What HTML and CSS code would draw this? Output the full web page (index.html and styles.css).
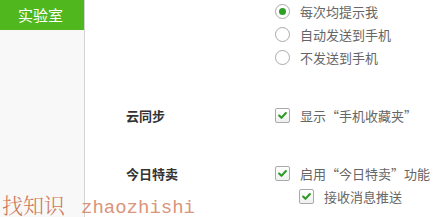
FILE: index.html
```html
<!DOCTYPE html>
<html lang="zh-CN">
<head>
<meta charset="utf-8">
<link rel="stylesheet" href="styles.css">
</head>
<body>
<div class="app">
  <aside class="sidebar">
    <div class="tab active">实验室</div>
  </aside>
  <main class="main">
    <section class="group">
      <div class="label"></div>
      <div class="controls">
        <div class="row"><span class="radio checked"></span><span class="text">每次均提示我</span></div>
        <div class="row"><span class="radio"></span><span class="text">自动发送到手机</span></div>
        <div class="row"><span class="radio"></span><span class="text">不发送到手机</span></div>
      </div>
    </section>
    <section class="group">
      <div class="label">云同步</div>
      <div class="controls">
        <div class="row"><span class="check"><svg viewBox="0 0 15 15"><path d="M3.6 7.6 L6.3 10.2 L11.4 4.6"/></svg></span><span class="text">显示“手机收藏夹”</span></div>
      </div>
    </section>
    <section class="group">
      <div class="label">今日特卖</div>
      <div class="controls">
        <div class="row"><span class="check"><svg viewBox="0 0 15 15"><path d="M3.6 7.6 L6.3 10.2 L11.4 4.6"/></svg></span><span class="text">启用“今日特卖”功能</span></div>
        <div class="row sub"><span class="check"><svg viewBox="0 0 15 15"><path d="M3.6 7.6 L6.3 10.2 L11.4 4.6"/></svg></span><span class="text">接收消息推送</span></div>
      </div>
    </section>
  </main>
</div>
<div class="watermark"><span class="wm-cjk">找知识</span><span class="wm-latin">zhaozhishi</span></div>
</body>
</html>
```
FILE: styles.css
```css
html, body {
  margin: 0;
  padding: 0;
  background: #ffffff;
}
body {
  font-family: "Noto Sans CJK SC", "Noto Sans", sans-serif;
  font-size: 13px;
  color: #666666;
  width: 445px;
  height: 217px;
  overflow: hidden;
  position: relative;
}
.app {
  display: flex;
  height: 217px;
}
.sidebar {
  width: 84px;
  flex: none;
  background: #f8f8f8;
  border-right: 1px solid #d3d3d3;
}
.tab {
  height: 30px;
  line-height: 30px;
  text-align: center;
  font-size: 15px;
  color: #ffffff;
  padding-right: 3px;
}
.tab.active {
  background: #50b81e;
}
.main {
  flex: 1;
  padding-left: 41px;
}
.group {
  display: grid;
  grid-template-columns: 149px 1fr;
  margin-bottom: 35px;
}
.label {
  font-weight: bold;
  color: #333333;
  line-height: 23px;
  font-size: 13px;
}
.row {
  display: flex;
  align-items: center;
  height: 23px;
}
.row.sub {
  padding-left: 24px;
}
.text {
  margin-left: 10px;
  line-height: 23px;
  white-space: nowrap;
}
.radio {
  width: 13px;
  height: 13px;
  border: 1px solid #a9a9a9;
  border-radius: 50%;
  background: #ffffff;
  display: flex;
  align-items: center;
  justify-content: center;
  flex: none;
}
.radio.checked::after {
  content: "";
  width: 7px;
  height: 7px;
  border-radius: 50%;
  background: #2f9e24;
}
.check {
  width: 13px;
  height: 13px;
  border: 1px solid #a9a9a9;
  border-radius: 2px;
  background: linear-gradient(#ffffff, #f0f0f0);
  flex: none;
  display: flex;
}
.check svg {
  width: 13px;
  height: 13px;
}
.check path {
  fill: none;
  stroke: #2d9a22;
  stroke-width: 2.4;
  stroke-linecap: round;
  stroke-linejoin: round;
}
.watermark {
  position: absolute;
  left: 2px;
  top: 193px;
  color: #c5582f;
  opacity: 0.8;
  white-space: nowrap;
  line-height: 22px;
}
.wm-cjk {
  font-family: "Noto Serif CJK SC", "Liberation Serif", serif;
  font-size: 21px;
  font-weight: 300;
}
.wm-latin {
  font-family: "Liberation Mono", monospace;
  font-size: 19px;
  color: #d27a5a;
  margin-left: 16px;
}
```
